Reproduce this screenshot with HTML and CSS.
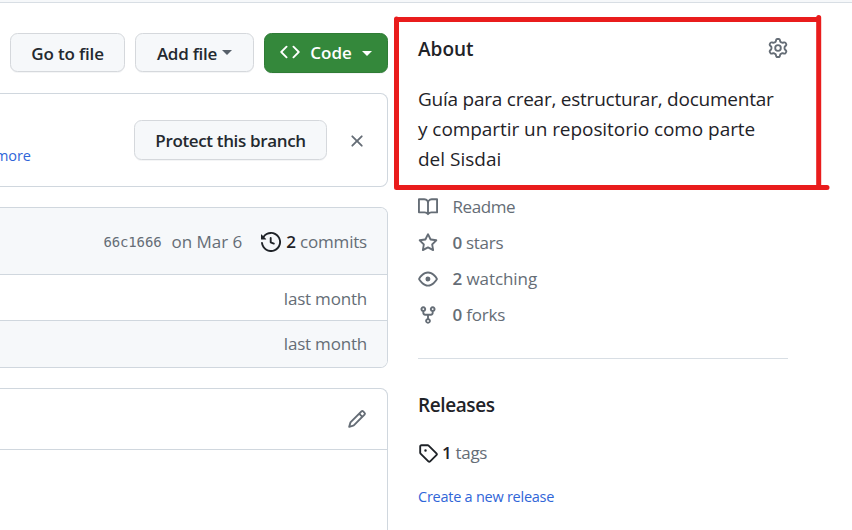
FILE: index.html
```html
<!DOCTYPE html>
<html lang="en">
<head>
<meta charset="utf-8">
<title>Repository</title>
<link rel="stylesheet" href="styles.css">
</head>
<body>
<div class="topline"></div>
<div class="page">
  <main class="main">
    <div class="toolbar">
      <button class="btn go"><span class="t-go">Go to file</span></button>
      <button class="btn add"><span class="t-add">Add file</span><i class="caret"></i></button>
      <button class="btn code"><svg class="icon" viewBox="0 0 16 16"><path d="m11.28 3.22 4.25 4.25a.75.75 0 0 1 0 1.06l-4.25 4.25a.749.749 0 0 1-1.275-.326.749.749 0 0 1 .215-.734L13.94 8l-3.72-3.72a.749.749 0 0 1 .326-1.275.749.749 0 0 1 .734.215Zm-6.56 0a.751.751 0 0 1 1.042.018.751.751 0 0 1 .018 1.042L2.06 8l3.72 3.72a.749.749 0 0 1-.326 1.275.749.749 0 0 1-.734-.215L.47 8.53a.75.75 0 0 1 0-1.06Z"/></svg><span class="t-code">Code</span><i class="caret"></i></button>
    </div>
    <section class="box protect">
      <a class="more">more</a>
      <button class="btn protect-btn"><span class="t-protect">Protect this branch</span></button>
      <svg class="icon close" viewBox="0 0 16 16"><path d="M3.72 3.72a.75.75 0 0 1 1.06 0L8 6.94l3.22-3.22a.749.749 0 0 1 1.275.326.749.749 0 0 1-.215.734L9.06 8l3.22 3.22a.749.749 0 0 1-.326 1.275.749.749 0 0 1-.734-.215L8 9.06l-3.22 3.22a.751.751 0 0 1-1.042-.018.751.751 0 0 1-.018-1.042L6.94 8 3.72 4.78a.75.75 0 0 1 0-1.06Z"/></svg>
    </section>
    <section class="box files">
      <div class="commit">
        <span class="sha">66c1666</span>
        <span class="date">on Mar 6</span>
        <svg class="icon" viewBox="0 0 16 16"><path d="m.427 1.927 1.215 1.215a8.002 8.002 0 1 1-1.6 5.685.75.75 0 1 1 1.493-.154 6.5 6.5 0 1 0 1.18-4.458l1.358 1.358A.25.25 0 0 1 3.896 6H.25A.25.25 0 0 1 0 5.75V2.104a.25.25 0 0 1 .427-.177ZM7.75 4a.75.75 0 0 1 .75.75v2.992l2.028.812a.75.75 0 0 1-.557 1.392l-2.5-1A.751.751 0 0 1 7 8.25v-3.5A.75.75 0 0 1 7.75 4Z"/></svg>
        <span class="commits"><b>2</b> commits</span>
      </div>
      <div class="row"><span class="ago">last month</span></div>
      <div class="row alt"><span class="ago">last month</span></div>
    </section>
    <section class="box readme">
      <div class="readme-head"><svg class="icon" viewBox="0 0 16 16"><path d="M11.013 1.427a1.75 1.75 0 0 1 2.474 0l1.086 1.086a1.75 1.75 0 0 1 0 2.474l-8.61 8.61c-.21.21-.47.364-.756.445l-3.251.93a.75.75 0 0 1-.927-.928l.929-3.25c.081-.286.235-.547.445-.758l8.61-8.61Zm.176 4.823L9.75 4.81l-6.286 6.287a.253.253 0 0 0-.064.108l-.558 1.953 1.953-.558a.253.253 0 0 0 .108-.064Zm1.238-3.763a.25.25 0 0 0-.354 0L10.811 3.75l1.439 1.44 1.263-1.263a.25.25 0 0 0 0-.354Z"/></svg></div>
    </section>
  </main>
  <aside class="side">
    <div class="about">
      <div class="about-head"><h2 class="t-about">About</h2>
        <svg class="icon" viewBox="0 0 16 16"><path d="M8 0a8.2 8.2 0 0 1 .701.031C9.444.095 9.99.645 10.16 1.29l.288 1.107c.018.066.079.158.212.224.231.114.454.243.668.386.123.082.233.09.299.071l1.103-.303c.644-.176 1.392.021 1.82.63.27.385.506.792.704 1.218.315.675.111 1.422-.364 1.891l-.814.806c-.049.048-.098.147-.088.294.016.257.016.515 0 .772-.01.147.038.246.088.294l.814.806c.475.469.679 1.216.364 1.891a7.977 7.977 0 0 1-.704 1.217c-.428.61-1.176.807-1.82.63l-1.102-.302c-.067-.019-.177-.011-.3.071a5.909 5.909 0 0 1-.668.386c-.133.066-.194.158-.211.224l-.29 1.106c-.168.646-.715 1.196-1.458 1.26a8.006 8.006 0 0 1-1.402 0c-.743-.064-1.289-.614-1.458-1.26l-.289-1.106c-.018-.066-.079-.158-.212-.224a5.738 5.738 0 0 1-.668-.386c-.123-.082-.233-.09-.299-.071l-1.103.303c-.644.176-1.392-.021-1.82-.63a8.12 8.12 0 0 1-.704-1.218c-.315-.675-.111-1.422.363-1.891l.815-.806c.05-.048.098-.147.088-.294a6.214 6.214 0 0 1 0-.772c.01-.147-.038-.246-.088-.294l-.815-.806C.635 6.045.431 5.298.746 4.623a7.92 7.92 0 0 1 .704-1.217c.428-.61 1.176-.807 1.82-.63l1.102.302c.067.019.177.011.3-.071.214-.143.437-.272.668-.386.133-.066.194-.158.211-.224l.29-1.106C6.009.645 6.556.095 7.299.03 7.53.01 7.764 0 8 0Zm-.571 1.525c-.036.003-.108.036-.137.146l-.289 1.105c-.147.561-.549.967-.998 1.189-.173.086-.34.183-.5.29-.417.278-.97.423-1.529.27l-1.103-.303c-.109-.03-.175.016-.195.045-.22.312-.412.644-.573.99-.014.031-.021.11.059.19l.815.806c.411.406.562.957.53 1.456a4.709 4.709 0 0 0 0 .582c.032.499-.119 1.05-.53 1.456l-.815.806c-.081.08-.073.159-.059.19.162.346.353.677.573.989.02.03.085.076.195.046l1.102-.303c.56-.153 1.113-.008 1.53.27.161.107.328.204.501.29.447.222.85.629.997 1.189l.289 1.105c.029.109.101.143.137.146a6.6 6.6 0 0 0 1.142 0c.036-.003.108-.036.137-.146l.289-1.105c.147-.561.549-.967.998-1.189.173-.086.34-.183.5-.29.417-.278.97-.423 1.529-.27l1.103.303c.109.029.175-.016.195-.045.22-.313.411-.644.573-.99.014-.031.021-.11-.059-.19l-.815-.806c-.411-.406-.562-.957-.53-1.456a4.709 4.709 0 0 0 0-.582c-.032-.499.119-1.05.53-1.456l.815-.806c.081-.08.073-.159.059-.19a6.464 6.464 0 0 0-.573-.989c-.02-.03-.085-.076-.195-.046l-1.102.303c-.56.153-1.113.008-1.53-.27a4.44 4.44 0 0 0-.501-.29c-.447-.222-.85-.629-.997-1.189l-.289-1.105c-.029-.11-.101-.143-.137-.146a6.6 6.6 0 0 0-1.142 0ZM11 8a3 3 0 1 1-6 0 3 3 0 0 1 6 0ZM9.5 8a1.5 1.5 0 1 0-3.001.001A1.5 1.5 0 0 0 9.5 8Z"/></svg>
      </div>
      <p class="desc"><span class="d1">Guía para crear, estructurar, documentar</span><br><span class="d2">y compartir un repositorio como parte</span><br><span class="d3">del Sisdai</span></p>
      <svg class="mark" viewBox="0 0 440 183"><path d="M6.5 11V179M6.5 11.5H428.7M428.7 9.5V179M6.5 179.500H437"/></svg>
    </div>
    <ul class="meta">
      <li><svg class="icon" viewBox="0 0 16 16"><path d="M0 1.75A.75.75 0 0 1 .75 1h4.253c1.227 0 2.317.59 3 1.501A3.743 3.743 0 0 1 11.006 1h4.245a.75.75 0 0 1 .75.75v10.5a.75.75 0 0 1-.75.75h-4.507a2.25 2.25 0 0 0-1.591.659l-.622.621a.75.75 0 0 1-1.06 0l-.622-.621A2.25 2.25 0 0 0 5.258 13H.75a.75.75 0 0 1-.75-.75Zm7.251 10.324.004-5.073-.002-2.253A2.25 2.25 0 0 0 5.003 2.5H1.5v9h3.757a3.75 3.75 0 0 1 1.994.574ZM8.755 4.75l-.004 7.322a3.752 3.752 0 0 1 1.992-.572H14.5v-9h-3.495a2.25 2.25 0 0 0-2.25 2.25Z"/></svg><span class="m1">Readme</span></li>
      <li><svg class="icon" viewBox="0 0 16 16"><path d="M8 .25a.75.75 0 0 1 .673.418l1.882 3.815 4.21.612a.75.75 0 0 1 .416 1.279l-3.046 2.97.719 4.192a.751.751 0 0 1-1.088.791L8 12.347l-3.766 1.98a.75.75 0 0 1-1.088-.79l.72-4.194L.818 6.374a.75.75 0 0 1 .416-1.28l4.21-.611L7.327.668A.75.75 0 0 1 8 .25Zm0 2.445L6.615 5.5a.75.75 0 0 1-.564.41l-3.097.45 2.24 2.184a.75.75 0 0 1 .216.664l-.528 3.084 2.769-1.456a.75.75 0 0 1 .698 0l2.77 1.456-.53-3.084a.75.75 0 0 1 .216-.664l2.24-2.183-3.096-.45a.75.75 0 0 1-.564-.41L8 2.694Z"/></svg><span class="m2"><b>0</b> stars</span></li>
      <li><svg class="icon" viewBox="0 0 16 16"><path d="M8 2c1.981 0 3.671.992 4.933 2.078 1.27 1.091 2.187 2.345 2.637 3.023a1.62 1.62 0 0 1 0 1.798c-.45.678-1.367 1.932-2.637 3.023C11.67 13.008 9.981 14 8 14c-1.981 0-3.671-.992-4.933-2.078C1.797 10.83.88 9.576.43 8.898a1.62 1.62 0 0 1 0-1.798c.45-.677 1.367-1.931 2.637-3.022C4.33 2.992 6.019 2 8 2ZM1.679 7.932a.12.12 0 0 0 0 .136c.411.622 1.241 1.75 2.366 2.717C5.176 11.758 6.527 12.5 8 12.5c1.473 0 2.825-.742 3.955-1.715 1.124-.967 1.954-2.096 2.366-2.717a.12.12 0 0 0 0-.136c-.412-.621-1.242-1.75-2.366-2.717C10.824 4.242 9.473 3.5 8 3.5c-1.473 0-2.825.742-3.955 1.715-1.124.967-1.954 2.096-2.366 2.717ZM8 10a2 2 0 1 1-.001-3.999A2 2 0 0 1 8 10Z"/></svg><span class="m3"><b>2</b> watching</span></li>
      <li><svg class="icon" viewBox="0 0 16 16"><path d="M5 5.372v.878c0 .414.336.75.75.75h4.5a.75.75 0 0 0 .75-.75v-.878a2.25 2.25 0 1 1 1.5 0v.878a2.25 2.25 0 0 1-2.25 2.25h-1.5v2.128a2.251 2.251 0 1 1-1.5 0V8.5h-1.5A2.25 2.25 0 0 1 3.5 6.25v-.878a2.25 2.25 0 1 1 1.5 0ZM5 3.25a.75.75 0 1 0-1.5 0 .75.75 0 0 0 1.5 0Zm6.75.75a.75.75 0 1 0 0-1.5.75.75 0 0 0 0 1.5Zm-3 8.75a.75.75 0 1 0-1.5 0 .75.75 0 0 0 1.5 0Z"/></svg><span class="m4"><b>0</b> forks</span></li>
    </ul>
    <div class="releases">
      <h2 class="t-rel">Releases</h2>
      <div class="tags"><svg class="icon" viewBox="0 0 16 16"><path d="M1 7.775V2.75C1 1.784 1.784 1 2.75 1h5.025c.464 0 .91.184 1.238.513l6.25 6.25a1.75 1.75 0 0 1 0 2.474l-5.026 5.026a1.75 1.75 0 0 1-2.474 0l-6.25-6.25A1.752 1.752 0 0 1 1 7.775Zm1.5 0c0 .066.026.13.073.177l6.25 6.25a.25.25 0 0 0 .354 0l5.025-5.025a.25.25 0 0 0 0-.354l-6.25-6.25a.25.25 0 0 0-.177-.073H2.75a.25.25 0 0 0-.25.25ZM6 5a1 1 0 1 1 0 2 1 1 0 0 1 0-2Z"/></svg><span class="t-tags"><b>1</b> tags</span></div>
      <a class="create">Create a new release</a>
    </div>
  </aside>
</div>
</body>
</html>
```
FILE: styles.css
```css
* { box-sizing: border-box; }
body { margin: 0; height: 530px; overflow: hidden; background: #fff; color: #1f2328; font: 17px/26px "Open Sans", "Noto Sans", sans-serif; }
h2, p, ul { margin: 0; padding: 0; }
span, a, h2 { white-space: nowrap; }
b { font-weight: 600; }
.icon { width: 20px; height: 20px; flex: none; fill: currentColor; }
.topline { height: 3px; background: #f6f8fa; border-bottom: 1px solid #d8dee4; }
.page { display: flex; gap: 30px; height: 527px; }
.main { width: 388px; padding-top: 30px; display: flex; flex-direction: column; gap: 20px; }
.toolbar { display: flex; justify-content: flex-end; gap: 10px; height: 40px; }
.btn { display: flex; align-items: center; justify-content: center; height: 39px; padding: 2px 0 0; border: 1px solid #d5d8dc; border-radius: 7.5px; background: #f6f8fa; color: #24292f; font: 600 17px/26px "Open Sans", "Noto Sans", sans-serif; box-shadow: 0 1px 0 #f4f5f6; }
.go { width: 115px; letter-spacing: -.15px; }
.add { width: 119px; gap: 5px; letter-spacing: -.25px; }
.add .caret { margin-top: -2px; }
.code { width: 124px; height: 40px; padding-top: 0; background: #34883b; border-color: #2f7c36; color: #fff; gap: 10px; }
.code .icon { margin-top: -3px; }
.caret { border: 5px solid transparent; border-top-color: #57606a; border-bottom: 0; }
.code .caret { border-top-color: #fff; }
.box { border: 1px solid #d0d7de; border-left: 0; border-radius: 0 7.5px 7.5px 0; overflow: hidden; flex: none; }
.protect { display: flex; align-items: center; height: 94px; padding-right: 20px; }
.more { color: #2f65d8; font-size: 14.5px; letter-spacing: -.1px; margin: 32px auto 0 -5px; }
.protect-btn { width: 193px; height: 40px; margin-right: 20px; letter-spacing: -.35px; }
.close { color: #656d76; margin-top: 2px; }
.files { height: 161px; color: #656d76; }
.commit { height: 67px; padding-top: 2px; background: #f6f8fa; border-bottom: 1px solid #d0d7de; display: flex; align-items: center; justify-content: flex-end; padding-right: 20px; }
.sha { font: 14px/26px "DejaVu Sans Mono", monospace; letter-spacing: -.15px; margin-right: 10px; }
.date { margin-right: 19px; }
.commits, .ago { letter-spacing: -.2px; }
.commit .icon { margin-right: 5px; }
.commit .icon, .commit b { color: #1f2328; }
.row { height: 45px; padding-top: 2px; display: flex; align-items: center; justify-content: flex-end; padding-right: 20px; }
.alt { height: 47px; padding-top: 0; border-top: 1px solid #d0d7de; background: #f6f8fa; }
.readme { height: 150px; border-bottom: 0; border-bottom-right-radius: 0; }
.readme-head { height: 61px; border-bottom: 1px solid #d0d7de; display: flex; align-items: center; justify-content: flex-end; padding-right: 20px; color: #656d76; }
.side { width: 370px; }
.about { position: relative; padding-top: 31px; height: 186px; }
.about-head { display: flex; justify-content: space-between; height: 30px; }
h2 { font-size: 19px; line-height: 30px; font-weight: 600; }
.about-head .icon { margin-top: 4px; color: #656d76; }
.desc { margin-top: 20px; font-size: 19px; line-height: 30px; }
.d1 { letter-spacing: -.24px; }
.d2 { letter-spacing: -.06px; }
.mark { position: absolute; left: -28.5px; top: 5px; width: 440px; height: 183px; overflow: visible; fill: none; stroke: #e91c1c; stroke-width: 5; stroke-linecap: round; }
.meta { list-style: none; color: #656d76; padding-top: 5px; height: 169px; }
.meta li { display: flex; align-items: center; gap: 14.5px; height: 26px; margin-bottom: 10px; }
.m1 { letter-spacing: -.4px; }
.m2 { letter-spacing: -.3px; }
.m3 { letter-spacing: -.08px; }
.m4 { letter-spacing: -.2px; }
.releases { border-top: 1px solid #d8dee4; padding-top: 31px; }
.t-rel { letter-spacing: -.4px; }
.tags { display: flex; align-items: center; gap: 4px; margin-top: 20px; height: 26px; color: #656d76; letter-spacing: -.3px; }
.tags .icon, .tags b { color: #1f2328; }
.create { display: block; margin-top: 19px; height: 24px; line-height: 24px; font-size: 14.5px; letter-spacing: -.25px; color: #2f65d8; }
```
